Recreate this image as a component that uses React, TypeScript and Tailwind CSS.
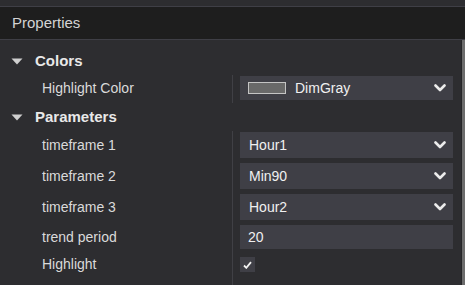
import React from "react";

const font = { fontFamily: '"Liberation Sans", Arial, sans-serif' };

const Triangle = () => (
  <svg width="12" height="7" viewBox="0 0 12 7" className="shrink-0">
    <polygon points="0.5,0.5 11.5,0.5 6,6.5" fill="#cfcfcf" />
  </svg>
);

const Chevron = () => (
  <svg width="12" height="8" viewBox="0 0 12 8" className="shrink-0">
    <polyline points="1.5,1.5 6,6 10.5,1.5" fill="none" stroke="#ececec" strokeWidth="2.6" strokeLinecap="round" strokeLinejoin="round" />
  </svg>
);

const SectionHeader = ({ title }: { title: string }) => (
  <div className="h-[28px] mb-[-3px] flex items-center pl-[11px] gap-[12px]">
    <Triangle />
    <span className="text-[15px] font-bold text-[#e8e8e8]">{title}</span>
  </div>
);

const Row = ({ label, h = 26, children }: { label: string; h?: number; children: React.ReactNode }) => (
  <div className="flex">
    <div className="w-[233px] border-r border-[#404045] pt-[1px] pb-[4px]">
      <div className={`flex items-center pl-[42px] text-[14px] text-[#dadada] ${h === 26 ? "h-[26px]" : "h-[24px]"}`}>{label}</div>
    </div>
    <div className="flex-1 pl-[7px] pr-[8px] pt-[1px] pb-[4px]">{children}</div>
  </div>
);

const Select = ({ value, swatch }: { value: string; swatch?: boolean }) => (
  <div className={`${swatch ? "h-[24px]" : "h-[26px]"} bg-[#3f3f46] flex items-center pl-[9px] pr-[7px] text-[14px] text-[#f0f0f0]`}>
    {swatch && <div className="w-[38px] h-[12px] border border-[#c4c4c4] bg-[#696969] mr-[9px] -ml-[1px]" />}
    <span className="flex-1">{value}</span>
    <Chevron />
  </div>
);

export default function App() {
  const params = [
    { label: "timeframe 1", value: "Hour1" },
    { label: "timeframe 2", value: "Min90" },
    { label: "timeframe 3", value: "Hour2" },
  ];

  return (
    <div className="w-[465px] h-[285px] bg-[#2d2d30] flex flex-col overflow-hidden" style={font}>
      <div className="h-[7px] shrink-0 border-b border-[#3f3f46]" />
      <div className="h-[33px] shrink-0 bg-[#1e1e1e] border-b border-[#3f3f46] flex items-center pl-[12px] text-[15px] text-[#d4d4d4]">
        Properties
      </div>
      <div className="flex flex-1 min-h-0">
        <div className="flex-1 pt-[7px]">
          <SectionHeader title="Colors" />
          <div className="pt-[3px] flex flex-col">
            <div className="flex">
              <div className="w-[233px] border-r border-[#404045] pt-[1px] pb-[3px]">
                <div className="h-[24px] flex items-center pl-[42px] text-[14px] text-[#dadada]">Highlight Color</div>
              </div>
              <div className="flex-1 pl-[7px] pr-[8px] pt-[1px] pb-[3px]">
                <Select value="DimGray" swatch />
              </div>
            </div>
          </div>
          <SectionHeader title="Parameters" />
          <div className="pt-[3px] flex flex-col">
            {params.map((p) => (
              <Row key={p.label} label={p.label}>
                <Select value={p.value} />
              </Row>
            ))}
            <Row label="trend period" h={24}>
              <div className="h-[24px] bg-[#3f3f46] flex items-center pl-[8px] text-[14px] text-[#f0f0f0]">20</div>
            </Row>
            <div className="flex h-[40px]">
              <div className="w-[233px] border-r border-[#404045] pt-[4px]">
                <div className="h-[15px] flex items-center pl-[42px] text-[14px] text-[#dadada]">Highlight</div>
              </div>
              <div className="flex-1 pl-[7px] pt-[4px]">
                <div className="w-[15px] h-[15px] bg-[#3f3f46] flex items-center justify-center">
                  <svg width="9" height="8" viewBox="0 0 9 8">
                    <polyline points="1,4.5 3.3,6.8 8,1.2" fill="none" stroke="#f2f2f2" strokeWidth="1.8" />
                  </svg>
                </div>
              </div>
            </div>
          </div>
        </div>
        <div className="w-[4px] shrink-0 border-l border-[#262628] bg-[#6c6c6c]" />
      </div>
    </div>
  );
}
